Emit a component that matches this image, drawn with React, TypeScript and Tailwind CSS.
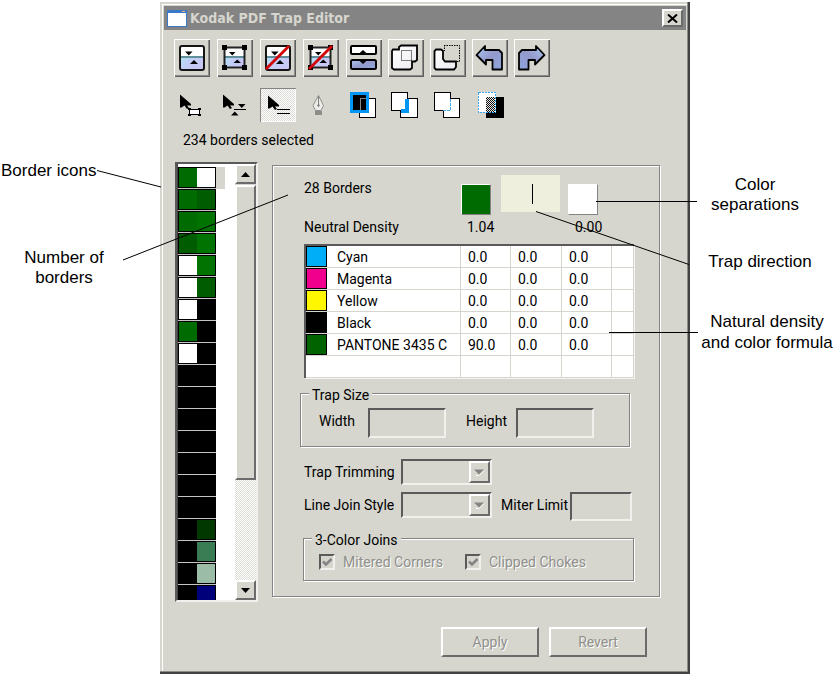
import React from "react";

const SUNKEN =
  "border-2 border-t-[#5a5a5a] border-l-[#5a5a5a] border-r-[#f0f0ec] border-b-[#f0f0ec]";
const RAISED =
  "border-2 border-t-white border-l-white border-r-[#6b6b6b] border-b-[#6b6b6b]";
const ETCHED =
  "border border-[#848484] shadow-[1px_1px_0_#fff,inset_1px_1px_0_#fff]";
const DISABLED = "text-[#8f8f8b] [text-shadow:1px_1px_0_#fff]";

/* ---------- toolbar drawings ---------- */

function Defs() {
  return (
    <svg width="0" height="0" className="absolute" aria-hidden="true">
      <defs>
        <linearGradient id="sky" x1="0" y1="0" x2="1" y2="0.4">
          <stop offset="0" stopColor="#b4e2f4" />
          <stop offset="0.5" stopColor="#c3cdf6" />
          <stop offset="1" stopColor="#c8c6f4" />
        </linearGradient>
        <linearGradient id="steel" x1="0" y1="0" x2="1" y2="1">
          <stop offset="0" stopColor="#a9c8ee" />
          <stop offset="0.5" stopColor="#9499cc" />
          <stop offset="1" stopColor="#8fa6de" />
        </linearGradient>
        <linearGradient id="paper" x1="0" y1="0" x2="1" y2="1">
          <stop offset="0" stopColor="#ffffff" />
          <stop offset="1" stopColor="#ececf0" />
        </linearGradient>
        <pattern id="checker" width="2" height="2" patternUnits="userSpaceOnUse">
          <rect width="2" height="2" fill="#e8e8e8" />
          <rect width="1" height="1" fill="#111" />
          <rect x="1" y="1" width="1" height="1" fill="#111" />
        </pattern>
      </defs>
    </svg>
  );
}

function Triangles() {
  return (
    <>
      <path d="M11 12.500h7.500l-3.750 4z" fill="#000" />
      <path d="M16 25h8l-4 -4z" fill="#000" />
    </>
  );
}

function Split() {
  return (
    <>
      <rect x="6" y="7" width="24" height="23" rx="2" fill="#fff" />
      <rect x="6" y="18" width="24" height="12" rx="1" fill="url(#sky)" />
      <rect x="6" y="17" width="24" height="2" fill="#5f8f98" />
      <rect x="6" y="7" width="24" height="24" rx="2" fill="none" stroke="#151515" strokeWidth="2" />
      <Triangles />
    </>
  );
}

function SplitHandles() {
  return (
    <>
      <rect x="8" y="9" width="19" height="9" fill="#fff" />
      <rect x="8" y="18" width="19" height="10" fill="url(#sky)" />
      <rect x="8" y="17" width="19" height="2" fill="#5f8f98" />
      <rect x="7.500" y="8.500" width="20" height="20" fill="none" stroke="#222" strokeWidth="2" />
      <g fill="#000" shapeRendering="crispEdges">
        <rect x="5" y="6" width="5" height="5" />
        <rect x="25" y="6" width="5" height="5" />
        <rect x="5" y="26" width="5" height="5" />
        <rect x="25" y="26" width="5" height="5" />
      </g>
      <path d="M12 13h6.500l-3.250 3.500z" fill="#000" />
      <path d="M16.500 24h7.500l-3.750 -3.500z" fill="#000" />
    </>
  );
}

const Slash = () => <path d="M6 30L29 7" stroke="#d2050a" strokeWidth="2.800" />;

function Separate() {
  return (
    <>
      <rect x="5" y="7" width="25" height="8" rx="1" fill="#fff" stroke="#000" strokeWidth="2" />
      <path d="M12 15.500l5 -4.500l5 4.500z" fill="#000" />
      <rect x="5" y="21" width="25" height="9" rx="1.500" fill="url(#steel)" stroke="#000" strokeWidth="2" />
      <path d="M12 20.500h10l-5 4.500z" fill="#000" />
    </>
  );
}

function Union() {
  return (
    <>
      <path d="M5 10.500H11V8L13 6.500H29V21L27 22.500H24V29L22 30.500H6L4 29V12z" fill="url(#paper)" stroke="#000" strokeWidth="1.800" />
      <rect x="13.500" y="11.500" width="10" height="10" fill="none" stroke="#000" strokeDasharray="1 1" />
    </>
  );
}

function Subtract() {
  return (
    <>
      <path d="M6 10.500H11L13 12V20L15 22.500H26V28L24 30.500H6L4.500 29V12z" fill="url(#paper)" stroke="#000" strokeWidth="1.800" />
      <path d="M14 6.500H29.500V22.500H26M14.500 6V12" fill="none" stroke="#000" strokeDasharray="1.500 1" />
    </>
  );
}

const ARROW = "M4.500 16L13 7V11H27L30 14V30.500H20.500V21H14V25.500z";

function Undo() {
  return <path d={ARROW} fill="url(#steel)" stroke="#000" strokeWidth="1.800" strokeLinejoin="round" />;
}

function Redo() {
  return (
    <g transform="matrix(-1 0 0 1 35 0)">
      <Undo />
    </g>
  );
}

const Pointer = () => (
  <path d="M6 6.500L17 16V17.500H13L15 20L13 21L10.500 17.500L7.500 19.500H6z" fill="#000" />
);

function PointerBox() {
  return (
    <>
      <Pointer />
      <g fill="none" stroke="#000" shapeRendering="crispEdges">
        <rect x="15" y="21" width="11" height="6" fill="#fff" stroke="none" />
        <path d="M14 21.500H27M14 26.500H27M15.500 20V28M25.500 20V28" />
        <path d="M14 20.500H17M24 20.500H27M14 27.500H17M24 27.500H27" />
      </g>
    </>
  );
}

function PointerTrap() {
  return (
    <>
      <Pointer />
      <path d="M21 16h7.500l-3.750 4z" fill="#000" />
      <rect x="17" y="21" width="12" height="1" fill="#000" />
      <path d="M14 27.500h7.500l-3.750 -4z" fill="#000" />
    </>
  );
}

function PointerLines() {
  return (
    <>
      <g transform="translate(2 1)">
        <Pointer />
      </g>
      <rect x="17" y="21" width="13" height="1" fill="#000" />
      <rect x="17" y="25" width="13" height="1" fill="#000" />
    </>
  );
}

function Pen() {
  return (
    <>
      <path d="M15.500 7.500L10 17.500L12.500 22.500H18L20.500 17.500z" fill="#ecece8" stroke="#90908c" />
      <path d="M15.500 8V17" stroke="#808080" />
      <circle cx="15.500" cy="17.500" r="1.200" fill="#808080" />
      <rect x="12" y="23" width="7" height="4" fill="#8c8c88" />
    </>
  );
}

function Overlap1() {
  return (
    <g shapeRendering="crispEdges">
      <rect x="13" y="10" width="17" height="20" fill="#000" />
      <rect x="14" y="11" width="15" height="18" fill="#fff" />
      <rect x="4" y="4" width="19" height="21" fill="#0096f5" />
      <rect x="7" y="7" width="13" height="15" fill="#000" />
      <path d="M14.500 22V10.500H20" fill="none" stroke="#888" />
    </g>
  );
}

function Overlap2() {
  return (
    <g shapeRendering="crispEdges">
      <rect x="12" y="10" width="18" height="20" fill="#000" />
      <rect x="13" y="11" width="16" height="18" fill="#fff" />
      <rect x="3" y="4" width="17" height="19" fill="#000" />
      <rect x="4" y="5" width="15" height="17" fill="#fff" />
      <path d="M17 11h4v14h-8v-4h4z" fill="#0096f5" />
    </g>
  );
}

function Overlap3() {
  return (
    <g shapeRendering="crispEdges">
      <rect x="13" y="10" width="17" height="20" fill="#000" />
      <rect x="14" y="11" width="15" height="18" fill="#fff" />
      <rect x="4" y="4" width="17" height="19" fill="#000" />
      <rect x="5" y="5" width="15" height="17" fill="#fff" />
      <path d="M20 11h1v12h-7v-1h6z" fill="#fff" />
      <path d="M20.500 11V22.500H13" fill="none" stroke="#39a9f5" strokeDasharray="3 1" />
    </g>
  );
}

function Overlap4() {
  return (
    <g shapeRendering="crispEdges">
      <rect x="14" y="9" width="18" height="21" fill="#000" />
      <rect x="6" y="4" width="18" height="20" fill="#fff" />
      <rect x="14" y="9" width="9" height="15" fill="url(#checker)" />
      <rect x="6.500" y="4.500" width="17" height="20" fill="none" stroke="#39a9f5" strokeDasharray="2 1" />
    </g>
  );
}

type Tool = { name: string; icon: React.ReactNode; pressed?: boolean };

const TOP_TOOLS: Tool[][] = [
  [
    { name: "Create trap", icon: <Split /> },
    { name: "Create trap on selection", icon: <SplitHandles /> },
    { name: "Remove trap", icon: <><Split /><Slash /></> },
    { name: "Remove trap on selection", icon: <><SplitHandles /><Slash /></> },
  ],
  [
    { name: "Separate", icon: <Separate /> },
    { name: "Union", icon: <Union /> },
    { name: "Subtract", icon: <Subtract /> },
    { name: "Undo", icon: <Undo /> },
    { name: "Redo", icon: <Redo /> },
  ],
];

const SELECT_TOOLS: Tool[][] = [
  [
    { name: "Select object", icon: <PointerBox /> },
    { name: "Select trap", icon: <PointerTrap /> },
    { name: "Select border", icon: <PointerLines />, pressed: true },
    { name: "Pen", icon: <Pen /> },
  ],
  [
    { name: "Show outline", icon: <Overlap1 /> },
    { name: "Show trap", icon: <Overlap2 /> },
    { name: "Show border", icon: <Overlap3 /> },
    { name: "Show overlap", icon: <Overlap4 /> },
  ],
];

function Toolbar({ groups, raised }: { groups: Tool[][]; raised?: boolean }) {
  return (
    <div className="flex gap-[7px]">
      {groups.map((group, i) => (
        <div key={i} className={i === 0 ? "flex gap-[7px]" : "flex gap-1.5"}>
          {group.map((tool) => (
            <button
              key={tool.name}
              aria-label={tool.name}
              aria-pressed={tool.pressed}
              className={
                raised
                  ? "h-[38px] w-9 shadow-[inset_1px_1px_0_#fff,inset_-1px_-1px_0_#5f5f5f,inset_-2px_-2px_0_#8a8a86]"
                  : tool.pressed
                    ? "h-[34px] w-9 bg-[repeating-conic-gradient(#fff_0_25%,#dcdcd6_0_50%)] bg-[length:2px_2px] shadow-[inset_1px_1px_0_#848484,inset_-1px_-1px_0_#fff]"
                    : "h-[34px] w-9"
              }
            >
              <svg width="36" height={raised ? 38 : 34} className="block" aria-hidden="true">
                {tool.icon}
              </svg>
            </button>
          ))}
        </div>
      ))}
    </div>
  );
}

/* ---------- border list ---------- */

const G = "#006b00";
const D = "#005c00";
const L = "#007300";
const W = "#ffffff";
const K = "#000000";

const BORDERS: [string, string][] = [
  [G, W], [G, D], [G, L], [D, L], [W, L], [W, D], [W, K], [G, K], [W, K],
  [K, K], [K, K], [K, K], [K, K], [K, K], [K, K], [K, K],
  [K, "#003800"], [K, "#3a7d55"], [K, "#9bbca6"], [K, "#00007b"],
];

function ScrollArrow({ down }: { down?: boolean }) {
  return (
    <button
      aria-label={down ? "Scroll down" : "Scroll up"}
      className={`flex h-5 shrink-0 items-center justify-center ${RAISED}`}
    >
      <svg width="9" height="5" aria-hidden="true">
        <path d={down ? "M0 0h9l-4.500 5z" : "M0 5h9l-4.500 -5z"} fill="#000" />
      </svg>
    </button>
  );
}

function BorderList() {
  return (
    <div className={`flex h-[440px] w-[83px] shrink-0 bg-white ${SUNKEN}`}>
      <ul className="flex-1 overflow-hidden border-l border-[#424242] pt-[3px]">
        {BORDERS.map(([a, b], i) => (
          <li key={i} className="flex h-[22px]">
            <button
              aria-label={`Border ${i + 1}`}
              className="flex h-[21px] w-[38px] border border-black shadow-[0_1px_0_#c4c4c4]"
            >
              <span className="h-full flex-1" style={{ backgroundColor: a }} />
              <span className="h-full flex-1" style={{ backgroundColor: b }} />
            </button>
            {i === 0 && <span className="w-[9px] bg-[#d6d6ce]" />}
          </li>
        ))}
      </ul>
      <div className="flex w-[21px] flex-col bg-[#d6d6ce]">
        <ScrollArrow />
        <div className={`mt-px h-[295px] ${RAISED}`} />
        <div className="flex-1 bg-[repeating-conic-gradient(#fff_0_25%,#dcdcd6_0_50%)] bg-[length:2px_2px]" />
        <ScrollArrow down />
      </div>
    </div>
  );
}

/* ---------- form parts ---------- */

function Field({ id, label, labelClass, inputClass }: { id: string; label: string; labelClass: string; inputClass: string }) {
  return (
    <div className="flex">
      <label htmlFor={id} className={`shrink-0 leading-[26px] ${labelClass}`}>{label}</label>
      <input id={id} disabled className={`bg-[#d6d6ce] ${SUNKEN} ${inputClass}`} />
    </div>
  );
}

function Choice({ id, label }: { id: string; label: string }) {
  return (
    <div className="flex h-[26px]">
      <label htmlFor={id} className="w-[97px] shrink-0 leading-[26px]">{label}</label>
      <div className="relative">
        <select id={id} disabled className={`block h-[26px] w-[91px] appearance-none bg-[#d6d6ce] opacity-100 ${SUNKEN}`}>
          <option></option>
        </select>
        <span className={`pointer-events-none absolute inset-y-0.5 right-0.5 flex w-[21px] items-center justify-center bg-[#d6d6ce] ${RAISED}`}>
          <svg width="11" height="7" aria-hidden="true">
            <path d="M2 6.500h3l5 -5" stroke="#fff" fill="none" />
            <path d="M0 0.500h10l-5 5z" fill="#848484" />
          </svg>
        </span>
      </div>
    </div>
  );
}

function Tick({ label, className }: { label: string; className?: string }) {
  return (
    <label className={`flex items-center gap-2 leading-4 ${DISABLED} ${className ?? ""}`}>
      <span className="relative block size-4">
        <input type="checkbox" checked readOnly disabled className={`block size-4 appearance-none ${SUNKEN}`} />
        <svg width="16" height="16" className="pointer-events-none absolute inset-0" aria-hidden="true">
          <path d="M4 7.500L7 10.500L12.500 5" stroke="#848484" strokeWidth="2.500" fill="none" />
        </svg>
      </span>
      {label}
    </label>
  );
}

const LEGEND = "bg-[#d6d6ce] px-[3px] pt-1 leading-4";

const INKS: { name: string; color: string; values: string[] }[] = [
  { name: "Cyan", color: "#00adf7", values: ["0.0", "0.0", "0.0"] },
  { name: "Magenta", color: "#f0008c", values: ["0.0", "0.0", "0.0"] },
  { name: "Yellow", color: "#fff700", values: ["0.0", "0.0", "0.0"] },
  { name: "Black", color: "#000000", values: ["0.0", "0.0", "0.0"] },
  { name: "PANTONE 3435 C", color: "#006300", values: ["90.0", "0.0", "0.0"] },
  { name: "", color: "", values: ["", "", ""] },
];

const CELL = "h-[22px] border-r border-b border-[#d6d6ce] p-0 pt-0.5 pl-[7px]";

function InkTable() {
  return (
    <table className="w-full table-fixed border-separate border-spacing-0 border-t-2 border-l-2 border-[#5a5a5a] bg-white leading-[19px] shadow-[1px_1px_0_#f4f4f0]">
      <colgroup>
        <col className="w-[21px]" />
        <col />
        <col className="w-[50px]" />
        <col className="w-[51px]" />
        <col className="w-[50px]" />
        <col className="w-[22px]" />
      </colgroup>
      <tbody>
        {INKS.map((ink, i) => (
          <tr key={i}>
            <td className="h-[22px] border-b border-[#d6d6ce] p-0">
              {ink.color && (
                <span className="block h-[21px] border border-black" style={{ backgroundColor: ink.color }} />
              )}
            </td>
            <td className="h-[22px] border-r border-b border-[#d6d6ce] p-0 pt-0.5 pl-2.5 whitespace-nowrap">{ink.name}</td>
            {ink.values.map((v, j) => (
              <td key={j} className={CELL}>{v}</td>
            ))}
            <td className={CELL} />
          </tr>
        ))}
      </tbody>
    </table>
  );
}

function DetailPanel() {
  return (
    <section className={`mt-[3px] mb-[5px] flex-1 pt-[9px] pr-[25px] pb-[15px] pl-[31px] ${ETCHED}`}>
      <div className="flex h-10 items-end">
        <p className="w-[157px] self-start pt-[3px] leading-5">28 Borders</p>
        <span className="h-[31px] w-[30px] border border-t-white border-r-[#848484] border-b-[#848484] border-l-white bg-[#006b00]" />
        <span className="mr-2 ml-2.5 flex h-[37px] w-[59px] items-center justify-center self-start bg-[#efefde]">
          <span className="ml-1 h-5 w-px bg-black" />
        </span>
        <span className="h-[31px] w-[30px] border border-t-white border-r-[#848484] border-b-[#848484] border-l-white bg-white" />
      </div>
      <div className="mt-0.5 mb-[7px] flex leading-5">
        <span className="w-[163px]">Neutral Density</span>
        <span className="w-[108px]">1.04</span>
        <span>0.00</span>
      </div>
      <InkTable />

      <fieldset className={`mt-[5px] mr-1 -ml-1 px-2 pb-2 ${ETCHED}`}>
        <legend className={LEGEND}>Trap Size</legend>
        <div className="flex gap-5 pt-[5px] pl-2.5">
          <Field id="width" label="Width" labelClass="w-[49px]" inputClass="h-[30px] w-[78px]" />
          <Field id="height" label="Height" labelClass="w-[50px]" inputClass="h-[30px] w-[78px]" />
        </div>
      </fieldset>

      <div className="mt-3">
        <Choice id="trimming" label="Trap Trimming" />
      </div>
      <div className="mt-[7px] flex gap-[9px]">
        <Choice id="join" label="Line Join Style" />
        <Field id="miter" label="Miter Limit" labelClass="w-[69px]" inputClass="h-[29px] w-[62px]" />
      </div>

      <fieldset className={`mt-[7px] -ml-px px-2 pb-2.5 ${ETCHED}`}>
        <legend className={LEGEND}>3-Color Joins</legend>
        <div className="flex pt-1.5 pl-[7px]">
          <Tick label="Mitered Corners" className="w-[146px]" />
          <Tick label="Clipped Chokes" />
        </div>
      </fieldset>
    </section>
  );
}

function Dialog() {
  return (
    <main className="min-w-0 bg-[#d6d6ce] p-1 font-[Roboto,'Liberation_Sans',sans-serif] text-sm text-black shadow-[inset_-2px_-2px_0_#424242,inset_-3px_-3px_0_#8c8c88,inset_2px_2px_0_#d6d6ce,inset_3px_3px_0_#fff]">
      <header className="flex h-6 items-center bg-[#848484] pr-[3px] pl-[3px]">
        <svg width="20" height="17" aria-hidden="true" shapeRendering="crispEdges">
          <rect width="20" height="17" fill="#3b78c9" />
          <rect x="1" y="3" width="18" height="13" fill="#fff" />
          <rect x="15" y="1" width="3" height="1" fill="#f3b27a" />
        </svg>
        <h1 className="flex-1 pl-[3px] font-['DejaVu_Sans_Condensed','DejaVu_Sans',sans-serif] text-sm font-bold text-[#d6d6ce]">
          Kodak PDF Trap Editor
        </h1>
        <button aria-label="Close" className={`flex h-[18px] w-[21px] items-center justify-center bg-[#d6d6ce] ${RAISED}`}>
          <svg width="11" height="9" aria-hidden="true">
            <path d="M1 0.500L10 8.500M10 0.500L1 8.500" stroke="#000" strokeWidth="2" />
          </svg>
        </button>
      </header>

      <div className="flex flex-col gap-[11px] pt-[9px] pl-2.5">
        <Toolbar groups={TOP_TOOLS} raised />
        <Toolbar groups={SELECT_TOOLS} />
      </div>
      <p className="mt-2 pl-[19px] leading-5">234 borders selected</p>

      <div className="mt-3 flex gap-3.5 pr-[26px] pl-[11px]">
        <BorderList />
        <DetailPanel />
      </div>

      <footer className="mt-[25px] flex justify-end gap-2.5 pr-[39px] pb-[13px]">
        <button disabled className={`h-[30px] w-[98px] ${RAISED} ${DISABLED}`}>Apply</button>
        <button disabled className={`h-[30px] w-[98px] ${RAISED} ${DISABLED}`}>Revert</button>
      </footer>
    </main>
  );
}

function Leaders() {
  return (
    <svg width="834" height="676" className="pointer-events-none absolute top-0 left-0" aria-hidden="true">
      <g stroke="#000" fill="none">
        <path d="M97 170.500L161 187" />
        <path d="M123 260L288 195" />
        <path d="M596 201.500H697" />
        <path d="M536 211.500L689 264.500" />
        <path d="M609 332.500H698" />
      </g>
    </svg>
  );
}

export default function App() {
  return (
    <div className="relative grid grid-cols-[160px_minmax(0,1fr)_144px] items-start bg-white pt-0.5 pb-0.5 font-['Liberation_Sans',Arial,sans-serif] text-[17px] leading-5 text-black">
      <Defs />
      <aside className="pt-[159px]">
        <p className="pl-px">Border icons</p>
        <p className="mt-[67px] pr-8 text-center">Number of<br />borders</p>
      </aside>
      <Dialog />
      <aside className="pt-[173px] text-center">
        <p className="pr-3.5">Color<br />separations</p>
        <p className="mt-[37px] pr-1">Trap direction</p>
        <p className="mt-[39px] pl-2.5 leading-[21px] whitespace-nowrap">Natural density<br />and color formula</p>
      </aside>
      <Leaders />
    </div>
  );
}
